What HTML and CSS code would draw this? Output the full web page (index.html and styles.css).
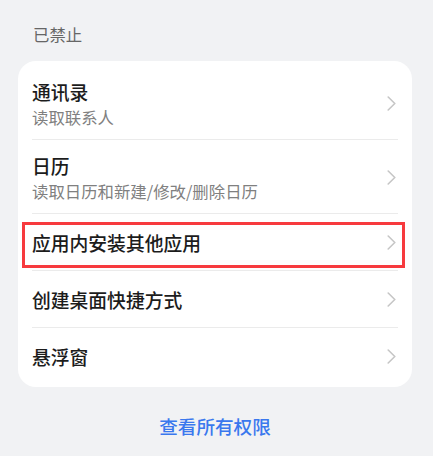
FILE: index.html
```html
<!DOCTYPE html>
<html lang="zh-CN">
<head>
<meta charset="utf-8">
<title>已禁止</title>
<link rel="stylesheet" href="styles.css">
</head>
<body>
<div class="page">
  <div class="section-title">已禁止</div>
  <div class="card">
    <div class="row two-line">
      <div class="texts">
        <div class="title">通讯录</div>
        <div class="sub">读取联系人</div>
      </div>
      <svg class="chev" viewBox="0 0 9 15" width="9" height="15"><polyline points="1.2,1 7.8,7.5 1.2,14" /></svg>
    </div>
    <div class="row two-line">
      <div class="texts">
        <div class="title">日历</div>
        <div class="sub">读取日历和新建/修改/删除日历</div>
      </div>
      <svg class="chev" viewBox="0 0 9 15" width="9" height="15"><polyline points="1.2,1 7.8,7.5 1.2,14" /></svg>
    </div>
    <div class="row one-line highlighted">
      <div class="texts">
        <div class="title">应用内安装其他应用</div>
      </div>
      <svg class="chev" viewBox="0 0 9 15" width="9" height="15"><polyline points="1.2,1 7.8,7.5 1.2,14" /></svg>
      <div class="mark"></div>
    </div>
    <div class="row one-line">
      <div class="texts">
        <div class="title">创建桌面快捷方式</div>
      </div>
      <svg class="chev" viewBox="0 0 9 15" width="9" height="15"><polyline points="1.2,1 7.8,7.5 1.2,14" /></svg>
    </div>
    <div class="row one-line">
      <div class="texts">
        <div class="title">悬浮窗</div>
      </div>
      <svg class="chev" viewBox="0 0 9 15" width="9" height="15"><polyline points="1.2,1 7.8,7.5 1.2,14" /></svg>
    </div>
  </div>
  <div class="link">查看所有权限</div>
</div>
</body>
</html>
```

FILE: styles.css
```css
html, body {
  margin: 0;
  padding: 0;
  background: #f1f2f4;
}
body {
  font-family: "Noto Sans CJK SC", "Noto Sans", sans-serif;
  width: 433px;
  height: 456px;
  overflow: hidden;
}
.page {
  margin: 0 21px 0 18px;
}
.section-title {
  padding: 23px 0 0 15px;
  font-size: 16.4px;
  line-height: 22px;
  color: #666666;
  margin-bottom: 16px;
}
.card {
  background: #ffffff;
  border-radius: 18px;
  padding: 5px 0 3px;
}
.row {
  position: relative;
  display: flex;
  align-items: center;
  margin: 0 14px;
  border-bottom: 1px solid #ebebeb;
}
.row:last-child {
  border-bottom: none;
}
.two-line {
  height: 74px;
  box-sizing: border-box;
  padding: 14px 0 12px;
  align-items: flex-start;
}
.two-line .chev {
  align-self: center;
}
.one-line {
  height: 56px;
}
.texts {
  flex: 1;
  min-width: 0;
}
.title {
  font-size: 18.8px;
  line-height: 24px;
  font-weight: 500;
  color: #1c1c1c;
}
.one-line .title {
  padding-top: 2px;
}
.sub {
  margin-top: 3px;
  font-size: 16.4px;
  line-height: 21px;
  color: #808080;
}
.chev {
  flex: none;
  margin-right: 2px;
  fill: none;
  stroke: #c6c6c6;
  stroke-width: 1.6;
  stroke-linecap: round;
  stroke-linejoin: round;
}
.mark {
  position: absolute;
  top: 8px;
  bottom: 2px;
  left: -10px;
  right: -7px;
  border: 3px solid #f73a3e;
  pointer-events: none;
}
.link {
  margin-top: 27px;
  text-align: center;
  font-size: 18.6px;
  line-height: 24px;
  font-weight: 500;
  color: #3a78ee;
}
```
